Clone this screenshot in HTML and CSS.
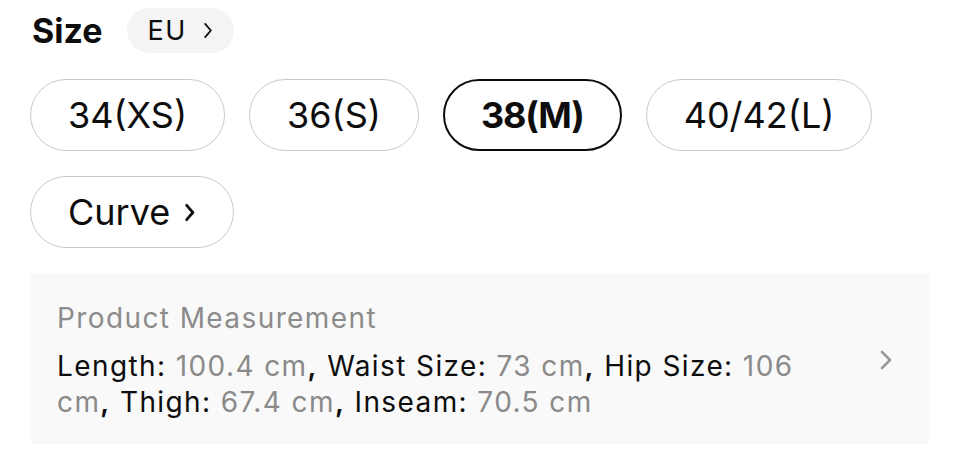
FILE: index.html
```html
<!DOCTYPE html>
<html lang="en">
<head>
<meta charset="utf-8">
<title>Size selector</title>
<link rel="stylesheet" href="styles.css">
</head>
<body>
<div class="page">
  <div class="size-head">
    <span class="size-title">Size</span>
    <span class="region">EU
      <svg class="chev-sm" viewBox="0 0 10 18" width="10" height="17"><path d="M2 2 L8 9 L2 16" fill="none" stroke="#111" stroke-width="2" stroke-linecap="round" stroke-linejoin="round"/></svg>
    </span>
  </div>
  <div class="pills">
    <span class="pill">34(XS)</span>
    <span class="pill">36(S)</span>
    <span class="pill selected">38(M)</span>
    <span class="pill">40/42(L)</span>
    <span class="pill curve">Curve
      <svg class="chev-md" viewBox="0 0 12 20" width="12" height="19"><path d="M2.5 2.5 L9 10 L2.5 17.5" fill="none" stroke="#111" stroke-width="3" stroke-linecap="round" stroke-linejoin="round"/></svg>
    </span>
  </div>
  <div class="measure">
    <div class="measure-text">
      <div class="measure-title">Product Measurement</div>
      <p class="measure-body"><span class="k">Length:</span> <span class="v">100.4 cm</span><span class="sep">,</span> <span class="k">Waist Size:</span> <span class="v">73 cm</span><span class="sep">,</span> <span class="k">Hip Size:</span> <span class="v">106</span> <span class="v">cm</span><span class="sep">,</span> <span class="k">Thigh:</span> <span class="v">67.4 cm</span><span class="sep">,</span> <span class="k">Inseam:</span> <span class="v">70.5 cm</span></p>
    </div>
    <svg class="chev-lg" viewBox="0 0 14 22" width="14" height="22"><path d="M3 3 L11 11 L3 19" fill="none" stroke="#9a9a9a" stroke-width="2.6" stroke-linecap="round" stroke-linejoin="round"/></svg>
  </div>
</div>
</body>
</html>
```

FILE: styles.css
```css
html, body {
  margin: 0;
  padding: 0;
  background: #ffffff;
}

body {
  font-family: Inter, "Noto Sans", "Liberation Sans", sans-serif;
  color: #0d0d0d;
}

.page {
  padding: 8px 31px 0 30px;
}

.size-head {
  display: flex;
  align-items: center;
  gap: 24px;
  padding-left: 2px;
}

.size-title {
  font-size: 34px;
  font-weight: 700;
  line-height: 45px;
}

.region {
  display: inline-flex;
  align-items: center;
  gap: 16px;
  height: 45px;
  padding: 0 21px 0 21px;
  border-radius: 23px;
  background: #f4f4f4;
  font-size: 27px;
  letter-spacing: 1.5px;
}

.pills {
  display: flex;
  flex-wrap: wrap;
  column-gap: 24px;
  row-gap: 25px;
  margin-top: 26px;
}

.pill {
  display: inline-flex;
  align-items: center;
  box-sizing: border-box;
  height: 72px;
  padding: 0 37px;
  border: 1px solid #c9c9c9;
  border-radius: 36px;
  font-size: 36px;
  color: #0d0d0d;
}

.pill.selected {
  border: 2px solid #0d0d0d;
  padding: 0 36px;
  font-weight: 700;
  letter-spacing: -1.2px;
}

.pill.curve {
  gap: 14px;
}

.measure {
  display: flex;
  align-items: center;
  gap: 40px;
  margin-top: 25px;
  margin-left: 1px;
  padding: 27px 36px 24px 26px;
  background: #f9f9f9;
}

.measure-text {
  flex: 1;
  font-size: 28px;
  line-height: 36px;
  letter-spacing: 1.4px;
}

.measure-title {
  color: #8c8c8c;
}

.measure-body {
  margin: 12px 0 0 0;
  color: #0d0d0d;
}

.measure-body .v {
  color: #8a8a8a;
}

.measure-body .sep {
  font-weight: 600;
}

.chev-lg {
  flex: none;
}
```
